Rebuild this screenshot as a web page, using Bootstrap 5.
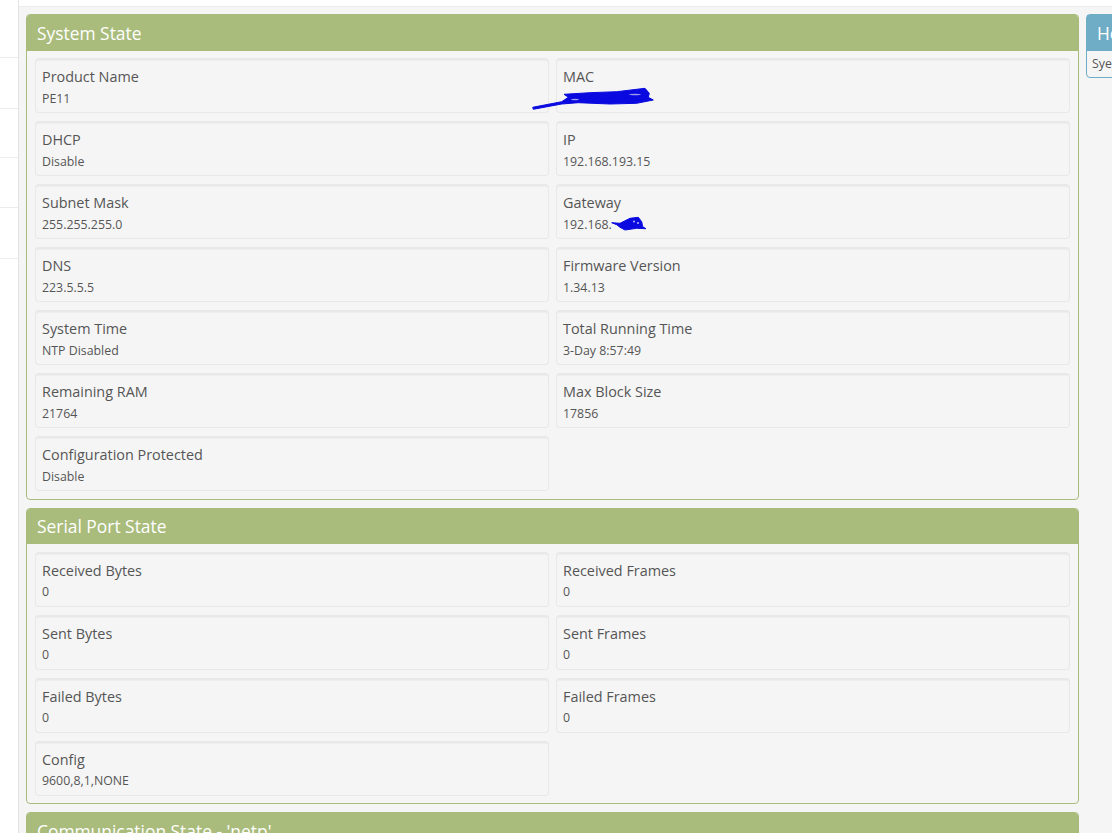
<!DOCTYPE html>
<html lang="en">
<head>
<meta charset="utf-8">
<title>System State</title>
<link rel="stylesheet" href="https://cdn.jsdelivr.net/npm/bootstrap@5.3.0/dist/css/bootstrap.min.css">
<style>
html,body{height:833px;overflow:hidden;}
body{background:#f5f5f5;font-family:"Open Sans","Liberation Sans",sans-serif;color:#555;}
.side-rail{width:19px;height:833px;background:#fff;border-right:1px solid #e3e3e6;flex:none;padding-top:57px;}
.side-item{height:50px;border-top:1px solid #ececee;}
.side-item:nth-child(1),.side-item:nth-child(4){height:51px;}
.side-item:nth-child(2){height:49px;}
.main-area{flex:none;width:1093px;}
.top-strip{height:7px;background:#fff;border-bottom:1px solid #ececf0;}
.panels{padding:7px 0 0 7px;gap:7px;width:1200px;}
.left-col{width:1053px;flex:none;}
.panel-box{border:1px solid #a9bc7c;border-radius:4px;background:#f5f5f5;margin-bottom:8px;}
.panel-box:first-child{margin-bottom:8px;}
.panel-box:first-child .panel-grid{padding-bottom:8px;}
.panel-head{background:#a9bc7c;color:#fff;font-size:17.4px;line-height:22px;padding:7px 10px 7px;border-radius:3px 3px 0 0;height:36px;}
.panel-grid{display:grid;grid-template-columns:514px 514px;column-gap:7px;row-gap:8px;padding:7px 8px 7px 8px;}
.stat-well{height:55px;border:1px solid #e8e8e8;border-top-width:2px;border-radius:4px;background:#f5f5f5;padding:7px 6px 0;box-shadow:inset 0 1px 1px rgba(0,0,0,.03);position:relative;}
.stat-name{font-size:14.4px;line-height:20px;color:#555;}
.stat-val{font-size:12.35px;line-height:16px;margin-top:4px;color:#555;}
.serial-panel .panel-head{padding-top:6px;height:35px;}
.serial-panel .panel-grid{padding-top:8px;}
.serial-panel .stat-val{margin-top:3px;}
.help-box{width:120px;height:64px;border:1px solid #6fadc6;border-radius:4px;background:#f5f5f5;flex:none;}
.help-head{background:#6fadc6;color:#fff;font-size:17.4px;line-height:22px;padding:7px 10px;height:36px;white-space:nowrap;}
.help-body{font-size:12.35px;line-height:16px;padding:5px 5px;color:#555;white-space:nowrap;}
.scribble{position:absolute;overflow:visible;pointer-events:none;}
.scribble-mac{left:-24px;top:28px;}
.scribble-gw{left:54px;top:29px;}
</style>
</head>
<body>
<div class="d-flex">
  <div class="side-rail">
    <div class="side-item"></div><div class="side-item"></div><div class="side-item"></div><div class="side-item"></div><div class="side-item"></div>
  </div>
  <div class="main-area">
    <div class="top-strip"></div>
    <div class="panels d-flex align-items-start">
      <div class="left-col">
        <section class="panel-box">
          <div class="panel-head">System State</div>
          <div class="panel-grid">
            <div class="stat-well"><div class="stat-name">Product Name</div><div class="stat-val">PE11</div></div>
            <div class="stat-well"><div class="stat-name">MAC</div><div class="stat-val">&nbsp;</div>
              <svg class="scribble scribble-mac" width="122" height="24" viewBox="0 0 122 24"><path d="M31 6.3 L57 4.7 L83.7 3.7 L112 .3 L116.3 5.3 L115.3 9.3 L120.3 12 L103.7 15.3 L77 16 L45.3 14.7 L28.7 16 L.3 21.3 L-.3 19.3 L28.7 13.7 L35.3 9.3 Z" fill="#0a0ae0" stroke="#0a0ae0" stroke-linejoin="round"/><ellipse cx="42" cy="11.5" rx="4" ry=".8" fill="#9c9cee"/><ellipse cx="102" cy="6.5" rx="6" ry=".7" fill="#9c9cee"/></svg>
            </div>
            <div class="stat-well"><div class="stat-name">DHCP</div><div class="stat-val">Disable</div></div>
            <div class="stat-well"><div class="stat-name">IP</div><div class="stat-val">192.168.193.15</div></div>
            <div class="stat-well"><div class="stat-name">Subnet Mask</div><div class="stat-val">255.255.255.0</div></div>
            <div class="stat-well"><div class="stat-name">Gateway</div><div class="stat-val">192.168.</div>
              <svg class="scribble scribble-gw" width="36" height="16" viewBox="0 0 36 16"><path d="M.7 7.7 L9 8.3 L19 3.3 L27.3 2.3 L30.7 6.7 L31.7 11.7 L35 13.7 L25.7 13.3 L14 15 L9 12.3 L5.7 9.7 Z" fill="#0a0ae0" stroke="#0a0ae0" stroke-width="1" stroke-linejoin="round"/><circle cx="23" cy="6.5" r=".9" fill="#c9c9f5"/><circle cx="27" cy="8" r=".9" fill="#c9c9f5"/></svg>
            </div>
            <div class="stat-well"><div class="stat-name">DNS</div><div class="stat-val">223.5.5.5</div></div>
            <div class="stat-well"><div class="stat-name">Firmware Version</div><div class="stat-val">1.34.13</div></div>
            <div class="stat-well"><div class="stat-name">System Time</div><div class="stat-val">NTP Disabled</div></div>
            <div class="stat-well"><div class="stat-name">Total Running Time</div><div class="stat-val">3-Day 8:57:49</div></div>
            <div class="stat-well"><div class="stat-name">Remaining RAM</div><div class="stat-val">21764</div></div>
            <div class="stat-well"><div class="stat-name">Max Block Size</div><div class="stat-val">17856</div></div>
            <div class="stat-well"><div class="stat-name">Configuration Protected</div><div class="stat-val">Disable</div></div>
          </div>
        </section>
        <section class="panel-box serial-panel">
          <div class="panel-head">Serial Port State</div>
          <div class="panel-grid">
            <div class="stat-well"><div class="stat-name">Received Bytes</div><div class="stat-val">0</div></div>
            <div class="stat-well"><div class="stat-name">Received Frames</div><div class="stat-val">0</div></div>
            <div class="stat-well"><div class="stat-name">Sent Bytes</div><div class="stat-val">0</div></div>
            <div class="stat-well"><div class="stat-name">Sent Frames</div><div class="stat-val">0</div></div>
            <div class="stat-well"><div class="stat-name">Failed Bytes</div><div class="stat-val">0</div></div>
            <div class="stat-well"><div class="stat-name">Failed Frames</div><div class="stat-val">0</div></div>
            <div class="stat-well"><div class="stat-name">Config</div><div class="stat-val">9600,8,1,NONE</div></div>
          </div>
        </section>
        <section class="panel-box">
          <div class="panel-head">Communication State - 'netp'</div>
        </section>
      </div>
      <aside class="help-box">
        <div class="help-head">Help</div>
        <div class="help-body">Syem state</div>
      </aside>
    </div>
  </div>
</div>
<script src="https://cdn.jsdelivr.net/npm/bootstrap@5.3.0/dist/js/bootstrap.bundle.min.js"></script>
</body>
</html>
